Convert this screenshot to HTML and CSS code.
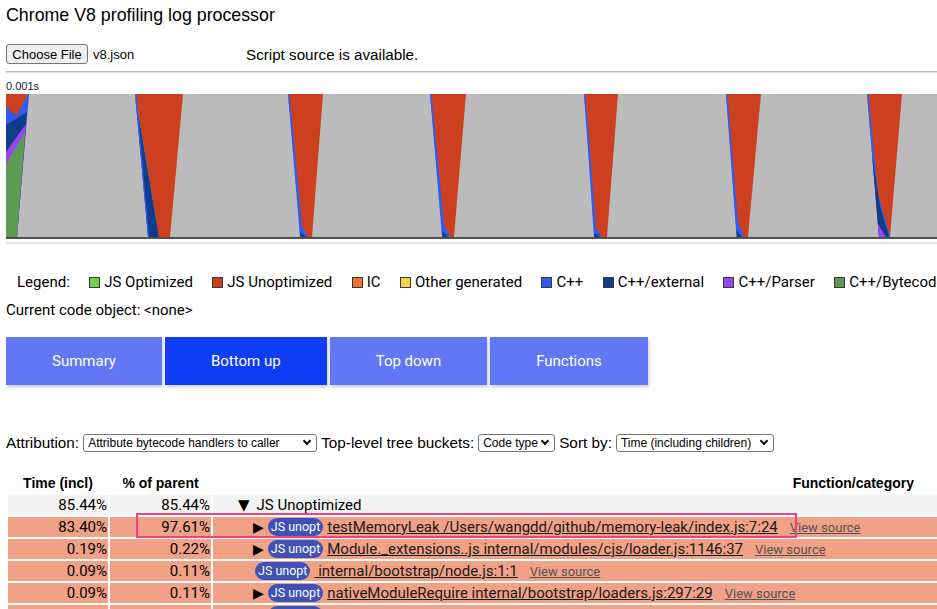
FILE: index.html
```html
<!DOCTYPE html>
<html>
<head>
<meta charset="utf-8">
<title>Chrome V8 profiling log processor</title>
<link rel="stylesheet" href="styles.css">
</head>
<body>
<div class="page">
  <div class="title">Chrome V8 profiling log processor</div>
  <div class="file-row">
    <button class="file-btn">Choose File</button>
    <span class="file-name">v8.json</span>
    <span class="source-note">Script source is available.</span>
  </div>
  <div class="rule"></div>
  <div class="time-label">0.001s</div>
  <div class="chart">
    <svg width="931" height="143" viewBox="0 0 931 143" xmlns="http://www.w3.org/2000/svg">
      <rect x="0" y="0" width="931" height="143" fill="#bbbbbb"/>
      <!-- left cluster -->
      <polygon points="0,0 23,0 11,143 0,143" fill="#2f5bf2"/>
      <polygon points="0,31 21,18 11,143 0,143" fill="#0f3d8c"/>
      <polygon points="0,58 20,30 11,143 0,143" fill="#9945f0"/>
      <polygon points="0,70 19,38 11,143 0,143" fill="#5d9b52"/>
      <polygon points="0,0 22,0 10.7,22 0,13" fill="#cc4020"/>
      <!-- spike 1 -->
      <polygon points="129,0 177,0 164,143 153,143" fill="#cc4020"/>
      <polygon points="129,0 142,143 153,143" fill="#0f3d8c"/>
      <polygon points="129,0 130.5,0 143,143 142,143" fill="#2f5bf2"/>
      <!-- spike 2 -->
      <polygon points="282,0 317,0 306,143 295,143" fill="#cc4020"/>
      <polygon points="282,0 283.5,0 296,132 302,143 294,143" fill="#2f5bf2"/>
      <polygon points="294,138 300,143 294.5,143" fill="#0f3d8c"/>
      <!-- spike 3 -->
      <polygon points="424,0 460,0 448,143 437,143" fill="#cc4020"/>
      <polygon points="424,0 425.5,0 438,130 444,143 436,143" fill="#2f5bf2"/>
      <polygon points="436,137 442,143 436.5,143" fill="#0f3d8c"/>
      <!-- spike 4 -->
      <polygon points="578,0 612,0 601,143 590,143" fill="#cc4020"/>
      <polygon points="578,0 579.5,0 590,134 596,143 588,143" fill="#2f5bf2"/>
      <polygon points="588,139 594,143 588.5,143" fill="#0f3d8c"/>
      <!-- spike 5 -->
      <polygon points="720,0 755,0 742,143 731,143" fill="#cc4020"/>
      <polygon points="720,0 721.5,0 732,128 738,143 730.5,143" fill="#2f5bf2"/>
      <polygon points="730.5,136 736,143 731,143" fill="#0f3d8c"/>
      <!-- spike 6 -->
      <polygon points="861,0 896,0 884,143 873,143" fill="#cc4020"/>
      <polygon points="861,0 862.5,0 872,100 884,143 873,143" fill="#2f5bf2"/>
      <polygon points="866,60 874,112 883,143 873,143" fill="#0f3d8c"/>
      <polygon points="872,130 880,143 873,143" fill="#9945f0"/>
    </svg>
  </div>
  <div class="band"></div>
  <div class="legend">
    <span class="legend-title">Legend:</span>
    <span class="legend-item"><span class="swatch sw-opt"></span>JS Optimized</span>
    <span class="legend-item"><span class="swatch sw-unopt"></span>JS Unoptimized</span>
    <span class="legend-item"><span class="swatch sw-ic"></span>IC</span>
    <span class="legend-item"><span class="swatch sw-other"></span>Other generated</span>
    <span class="legend-item"><span class="swatch sw-cpp"></span>C++</span>
    <span class="legend-item"><span class="swatch sw-ext"></span>C++/external</span>
    <span class="legend-item"><span class="swatch sw-parser"></span>C++/Parser</span>
    <span class="legend-item"><span class="swatch sw-bytecode"></span>C++/Bytecode</span>
  </div>
  <div class="current">Current code object: &lt;none&gt;</div>
  <div class="tabs">
    <div class="tab">Summary</div>
    <div class="tab tab-active">Bottom up</div>
    <div class="tab">Top down</div>
    <div class="tab">Functions</div>
  </div>
  <div class="controls">
    <span class="ctl-label">Attribution:</span>
    <span class="sel-wrap"><select class="sel sel-attr"><option>Attribute bytecode handlers to caller</option></select></span>
    <span class="ctl-label">Top-level tree buckets:</span>
    <span class="sel-wrap"><select class="sel sel-bucket"><option>Code type</option></select></span>
    <span class="ctl-label">Sort by:</span>
    <span class="sel-wrap"><select class="sel sel-sort"><option>Time (including children)</option></select></span>
  </div>
  <div class="table-wrap">
    <table class="tree">
      <thead>
        <tr>
          <th class="c-time">Time (incl)</th>
          <th class="c-pct">% of parent</th>
          <th class="c-fn">Function/category</th>
        </tr>
      </thead>
      <tbody>
        <tr class="row-cat">
          <td class="num">85.44%</td>
          <td class="num">85.44%</td>
          <td class="fn lvl1"><span class="tri tri-open">▼</span>JS Unoptimized</td>
        </tr>
        <tr class="row-js">
          <td class="num">83.40%</td>
          <td class="num">97.61%</td>
          <td class="fn lvl2"><span class="tri">▶</span><span class="badge">JS unopt</span><a class="fn-link">testMemoryLeak /Users/wangdd/github/memory-leak/index.js:7:24</a><a class="view-src">View source</a></td>
        </tr>
        <tr class="row-js">
          <td class="num">0.19%</td>
          <td class="num">0.22%</td>
          <td class="fn lvl2"><span class="tri">▶</span><span class="badge">JS unopt</span><a class="fn-link">Module._extensions..js internal/modules/cjs/loader.js:1146:37</a><a class="view-src">View source</a></td>
        </tr>
        <tr class="row-js">
          <td class="num">0.09%</td>
          <td class="num">0.11%</td>
          <td class="fn leaf"><span class="badge">JS unopt</span><a class="fn-link">&nbsp;internal/bootstrap/node.js:1:1</a><a class="view-src">View source</a></td>
        </tr>
        <tr class="row-js">
          <td class="num">0.09%</td>
          <td class="num">0.11%</td>
          <td class="fn lvl2"><span class="tri">▶</span><span class="badge">JS unopt</span><a class="fn-link">nativeModuleRequire internal/bootstrap/loaders.js:297:29</a><a class="view-src">View source</a></td>
        </tr>
        <tr class="row-js">
          <td class="num">0.08%</td>
          <td class="num">0.11%</td>
          <td class="fn lvl2"><span class="tri">▶</span><span class="badge">JS unopt</span><a class="fn-link">Timeout internal/timers.js:202:30</a><a class="view-src">View source</a></td>
        </tr>
      </tbody>
    </table>
    <div class="highlight"></div>
  </div>
</div>
</body>
</html>
```
FILE: styles.css
```css
html, body {
  margin: 0;
  padding: 0;
  overflow: hidden;
  background: #ffffff;
}
body {
  font-family: "Liberation Sans", Arial, sans-serif;
  color: #000;
}
.page {
  padding-left: 6px;
  width: 1200px;
}
.title {
  font-size: 17.8px;
  height: 30px;
  line-height: 30px;
}
.file-row {
  margin-top: 14px;
  height: 20px;
  display: flex;
  align-items: center;
}
.file-btn {
  box-sizing: border-box;
  height: 20px;
  width: 82px;
  padding: 0;
  font-family: "Liberation Sans", Arial, sans-serif;
  font-size: 13px;
  color: #000;
  background: #efefef;
  border: 1px solid #767676;
  border-radius: 3px;
}
.file-name {
  font-size: 13px;
  margin-left: 5px;
  width: 153px;
}
.source-note {
  font-size: 15.2px;
}
.rule {
  margin-top: 7px;
  width: 931px;
  height: 1px;
  background: #b9b9b9;
  border-bottom: 1px solid #e2e2e2;
}
.time-label {
  margin-top: 7px;
  font-size: 11px;
  line-height: 12px;
  height: 12px;
  color: #222;
}
.chart {
  margin-top: 2px;
  width: 931px;
  height: 143px;
  border-bottom: 2px solid #505050;
}
.chart svg {
  display: block;
}
.band {
  margin-top: 3px;
  width: 931px;
  height: 2px;
  background: #e4e4e4;
}
.legend {
  margin-top: 28px;
  padding-left: 11px;
  height: 20px;
  line-height: 20px;
  display: flex;
  align-items: center;
  gap: 19.4px;
  white-space: nowrap;
  font-family: Roboto, "Liberation Sans", sans-serif;
  font-size: 15px;
}
.legend-item {
  display: flex;
  align-items: center;
  gap: 4px;
}
.swatch {
  display: inline-block;
  box-sizing: border-box;
  width: 11px;
  height: 11px;
  border: 1px solid #3a3a3a;
}
.sw-opt { background: #74d14c; }
.sw-unopt { background: #cc4020; }
.sw-ic { background: #ef7430; }
.sw-other { background: #f4d345; }
.sw-cpp { background: #2f5bf2; }
.sw-ext { background: #0f3d8c; }
.sw-parser { background: #9945f0; }
.sw-bytecode { background: #5d9b52; }
.current {
  margin-top: 8px;
  height: 20px;
  line-height: 20px;
  font-family: Roboto, "Liberation Sans", sans-serif;
  font-size: 15px;
}
.tabs {
  margin-top: 17px;
  display: flex;
  gap: 3px;
}
.tab {
  height: 48px;
  line-height: 48px;
  padding: 0 46px;
  background: #6177f5;
  color: #ffffff;
  font-family: Roboto, "Liberation Sans", sans-serif;
  font-size: 15px;
  box-shadow: 1px 2px 3px rgba(0, 0, 0, 0.22);
}
.tab-active {
  background: #0f3cf5;
}
.controls {
  margin-top: 47px;
  height: 22px;
  display: flex;
  align-items: center;
  font-size: 15.3px;
  white-space: nowrap;
}
.ctl-label {
  margin-right: 4px;
}
.sel-wrap {
  position: relative;
  display: inline-flex;
  margin-right: 4px;
}
.sel-wrap::after {
  content: "";
  position: absolute;
  right: 7px;
  top: 4px;
  width: 4px;
  height: 4px;
  border-right: 2px solid #111;
  border-bottom: 2px solid #111;
  transform: rotate(45deg);
  pointer-events: none;
}
.sel {
  -webkit-appearance: none;
  appearance: none;
  box-sizing: border-box;
  height: 18px;
  font-family: "Liberation Sans", Arial, sans-serif;
  font-size: 12px;
  color: #000;
  background: #fff;
  border: 1px solid #767676;
  border-radius: 3px;
  padding: 0 14px 0 4px;
  margin: 0;
}
.sel-attr { width: 234px; }
.sel-bucket { width: 77px; }
.sel-sort { width: 158px; }
.table-wrap {
  position: relative;
  margin-top: 17px;
}
.tree {
  border-collapse: separate;
  border-spacing: 2px;
  width: 933px;
  table-layout: fixed;
}
.tree th {
  height: 20px;
  padding: 0;
  font-size: 14px;
  font-weight: bold;
  text-align: center;
}
.tree th.c-time { width: 100px; }
.tree th.c-pct { width: 101px; }
.tree th.c-fn {
  text-align: right;
  padding-right: 23px;
}
.tree td {
  height: 20px;
  padding: 0;
  font-family: Roboto, "Liberation Sans", sans-serif;
  font-size: 15px;
  white-space: nowrap;
  overflow: hidden;
}
.row-cat td { background: #f3f3f3; }
.row-js td { background: #f1a186; }
.tree td.num {
  text-align: right;
  padding-right: 1px;
}
.fn.lvl1 { padding-left: 25px; }
.fn.lvl2 { padding-left: 40px; }
.fn.leaf { padding-left: 42px; }
.tri {
  display: inline-block;
  font-family: "DejaVu Sans", sans-serif;
  font-size: 14px;
  margin-right: 4px;
}
.tri-open {
  font-size: 15px;
  margin-right: 7px;
}
.badge {
  display: inline-block;
  height: 18px;
  line-height: 18px;
  padding: 0 3px;
  border-radius: 9px;
  background: #3f51b5;
  color: #ffffff;
  font-size: 12.5px;
  vertical-align: middle;
  margin-top: -2px;
  margin-right: 4px;
}
.fn-link {
  color: #1a1a1a;
  text-decoration: underline;
}
.view-src {
  margin-left: 12px;
  color: #555555;
  font-size: 13px;
  text-decoration: underline;
}
.highlight {
  position: absolute;
  left: 130px;
  top: 42px;
  width: 657px;
  height: 21px;
  border: 2px solid #e9467f;
  pointer-events: none;
}
```
